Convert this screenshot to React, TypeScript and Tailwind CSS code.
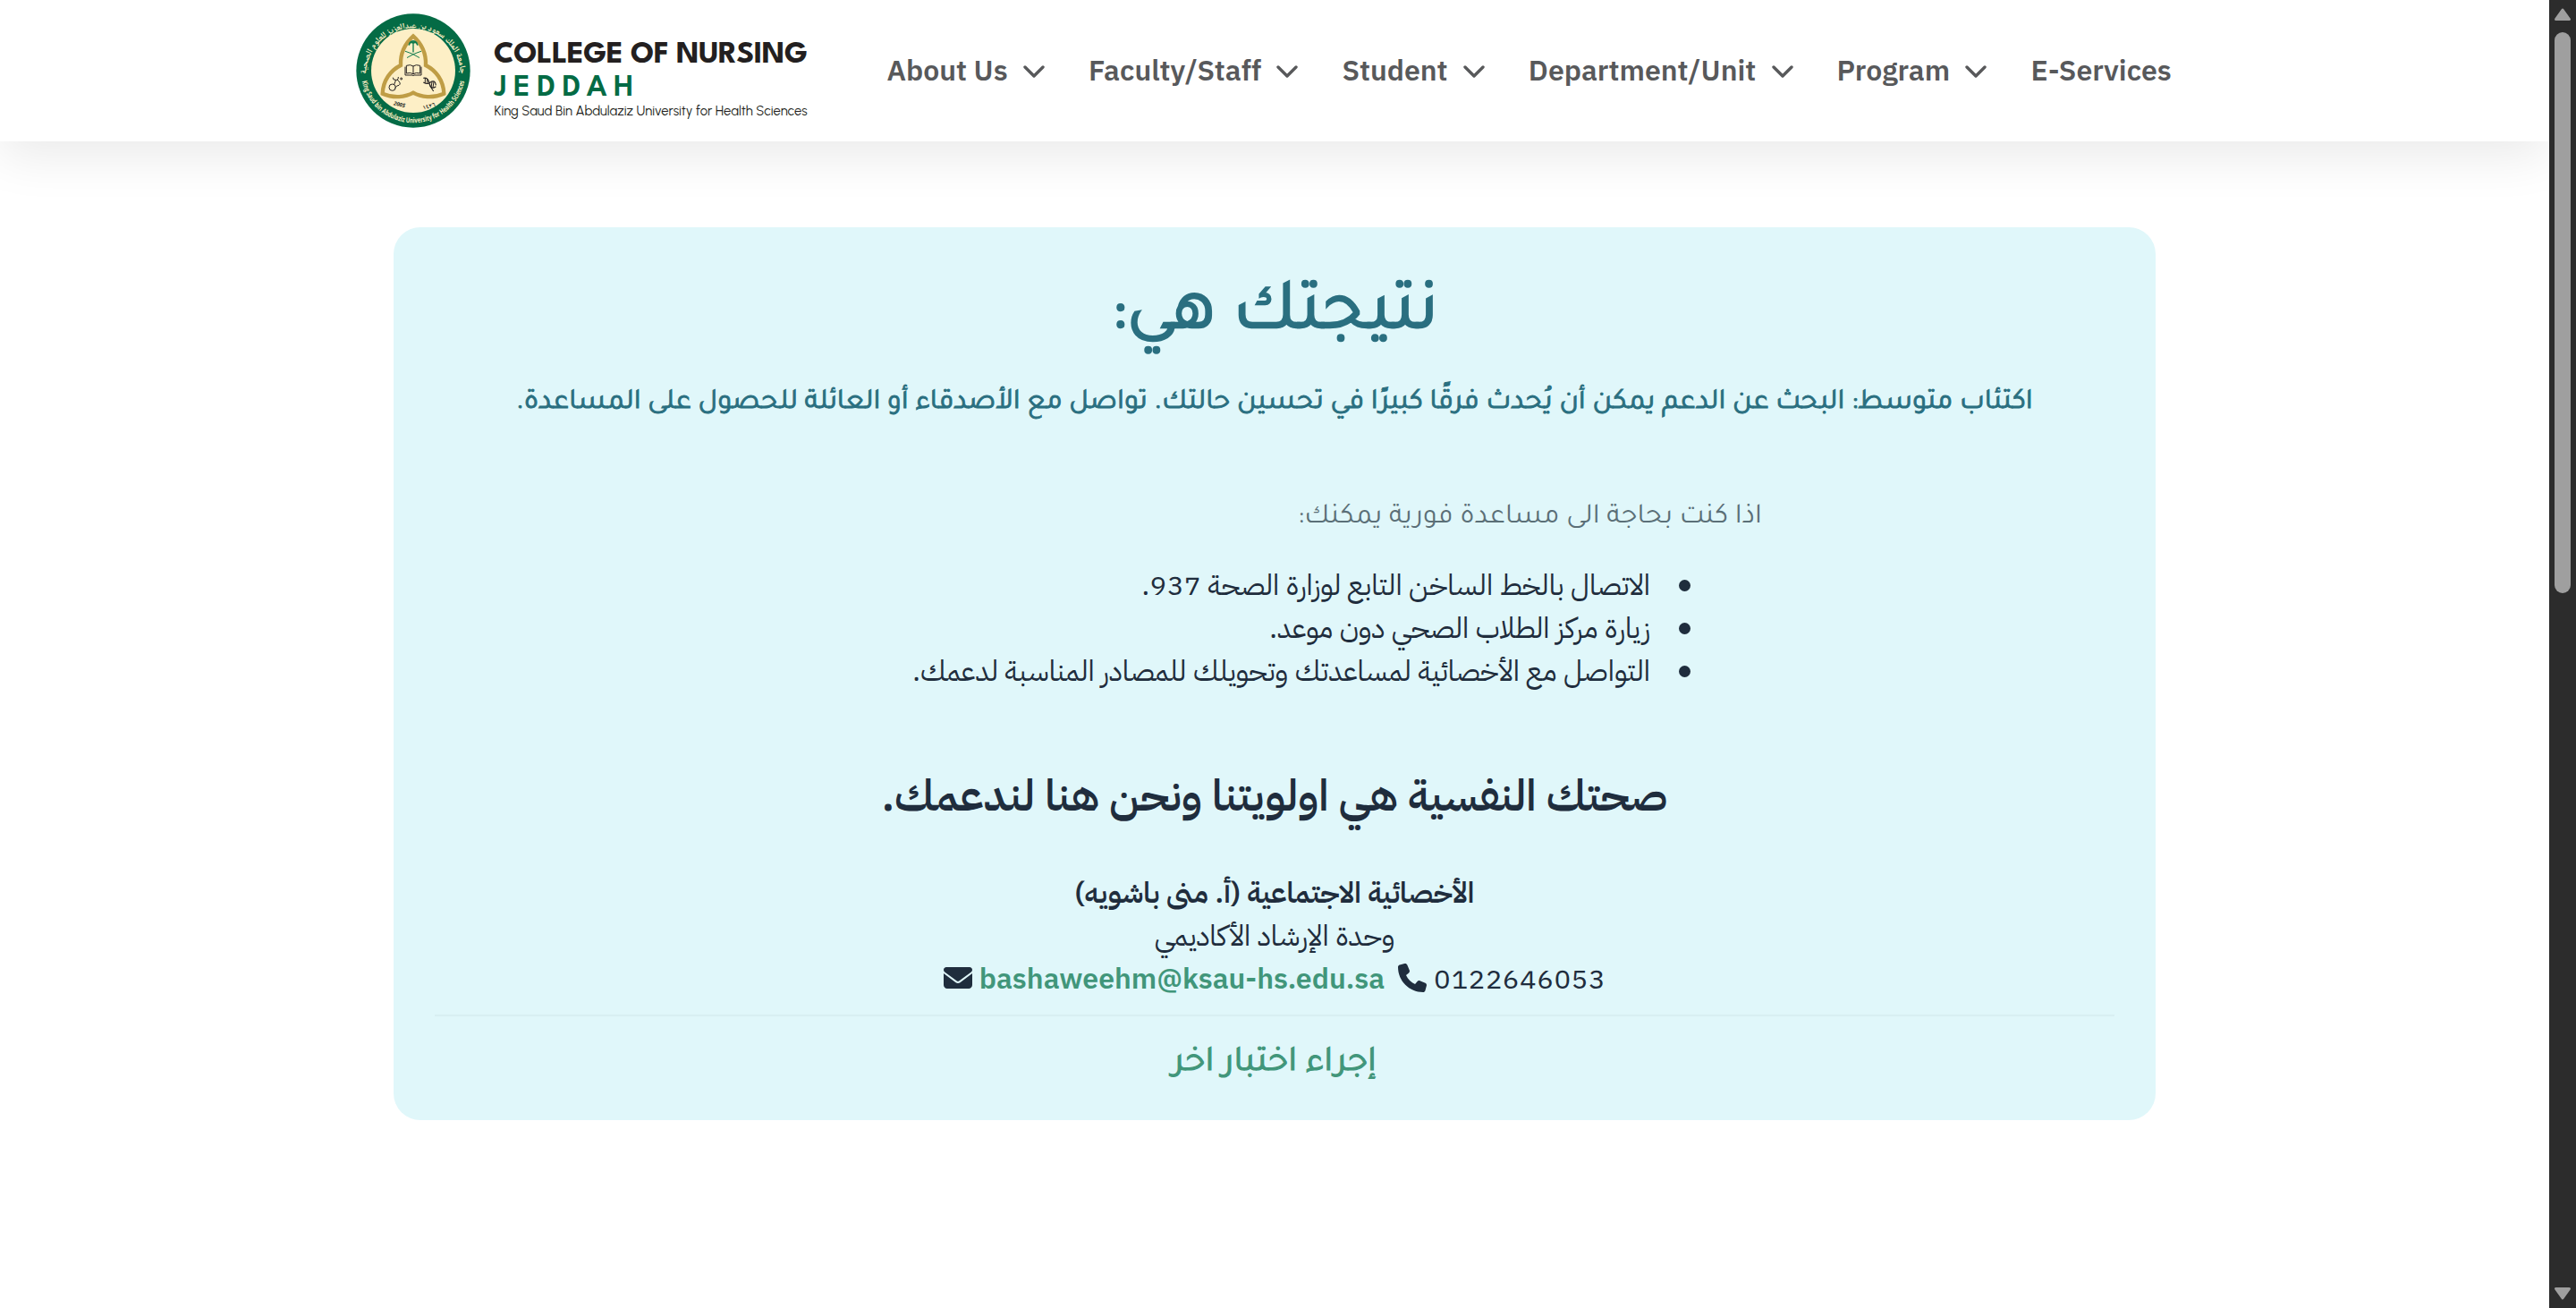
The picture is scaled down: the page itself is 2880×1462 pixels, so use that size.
import React from "react";
import { FaEnvelope, FaPhone } from "react-icons/fa6";

const navItems = [
  { label: "About Us", menu: true },
  { label: "Faculty/Staff", menu: true },
  { label: "Student", menu: true },
  { label: "Department/Unit", menu: true },
  { label: "Program", menu: true },
  { label: "E-Services", menu: false },
];

const helpOptions = [
  "الاتصال بالخط الساخن التابع لوزارة الصحة 937.",
  "زيارة مركز الطلاب الصحي دون موعد.",
  "التواصل مع الأخصائية لمساعدتك وتحويلك للمصادر المناسبة لدعمك.",
];

function Chevron() {
  return (
    <svg className="mt-[3px] h-[14px] w-6" viewBox="0 0 24 14" fill="none" stroke="currentColor" strokeWidth="3.4" strokeLinecap="round" strokeLinejoin="round">
      <path d="M2 2 L12 12 L22 2" />
    </svg>
  );
}

function Emblem() {
  return (
    <g transform="translate(-8 -7) scale(.33333)">
      <circle cx="216" cy="213" r="191" fill="#046b45" />
      <circle cx="216" cy="213" r="141" fill="#fdefc6" />
      <path id="ring-top" d="M58 228 A158 158 0 1 1 374 228" fill="none" />
      <path id="ring-bottom" d="M41 213 A175 175 0 0 0 391 213" fill="none" />
      <text fill="#fdefc6" fontSize="29" fontWeight="700" textAnchor="middle" fontFamily="'Noto Naskh Arabic', 'DejaVu Sans', sans-serif">
        <textPath href="#ring-top" startOffset="50%">جامعة الملك سعود بن عبدالعزيز للعلوم الصحية</textPath>
      </text>
      <text fill="#fdefc6" fontSize="24" fontWeight="700" textLength="478" lengthAdjust="spacingAndGlyphs" textAnchor="middle" fontFamily="'Open Sans', sans-serif">
        <textPath href="#ring-bottom" startOffset="50%">King Saud bin Abdulaziz University for Health Sciences</textPath>
      </text>
      <path d="M216 97 C186 124 172 155 174 195 C140 212 115 245 113 290 C150 306 190 302 216 287 C242 302 282 306 319 290 C317 245 292 212 258 195 C260 155 246 124 216 97 Z" fill="none" stroke="#bf9d45" strokeWidth="13" />
      <g stroke="#0f7a4c" fill="none" strokeWidth="4" strokeLinecap="round">
        <path d="M216 122 V150" />
        <path d="M202 126 Q206 114 216 120 Q226 114 230 126 M205 119 Q216 108 227 119" strokeWidth="5" />
        <path d="M190 148 Q212 154 236 169 M242 148 Q220 154 196 169" strokeWidth="3" />
      </g>
      <g stroke="#231f20" fill="none" strokeWidth="3">
        <path d="M193 196 Q207 191 216 198 Q225 191 239 196 V222 Q225 218 216 224 Q207 218 193 222 Z M216 198 V224 M189 200 V228 H213 Q216 232 219 228 H243 V200" />
        <circle cx="146" cy="269" r="11" />
        <path d="M152 259 L158 244 Q148 246 148 236 M158 244 Q166 246 166 234 M162 243 Q178 256 168 262 Q160 262 154 272" />
        <circle cx="176" cy="240" r="3" />
        <path d="M250 238 Q266 234 270 256 Q274 278 292 266 M250 252 Q266 262 276 250 Q290 244 292 262 M270 256 Q276 272 284 282" strokeWidth="3.5" />
        <path d="M256 238 L256 254 M263 240 L264 256 M279 250 L276 270 M285 250 L282 270" strokeWidth="3" />
      </g>
      <text transform="translate(149 328) rotate(13)" fontSize="18" fontWeight="700" fontStyle="italic" fill="#231f20" fontFamily="'Open Sans', sans-serif">2005</text>
      <text transform="translate(250 344) rotate(-16)" fontSize="22" fontWeight="700" fill="#231f20" fontFamily="'Noto Naskh Arabic', 'DejaVu Sans', sans-serif">١٤٢٦</text>
    </g>
  );
}

function Logo() {
  return (
    <svg className="h-32 w-[506px] shrink-0" viewBox="0 0 506 128">
      <Emblem />
      <text x="154" y="54.8" fontSize="35.5" fontWeight="700" fill="#231f20" textLength="351" lengthAdjust="spacing" fontFamily="'League Spartan', Lato, sans-serif">COLLEGE OF NURSING</text>
      <text x="154.5" y="91.9" fontSize="35.5" fontWeight="600" fill="#046b45" textLength="156" lengthAdjust="spacing" fontFamily="'League Spartan', Lato, sans-serif">JEDDAH</text>
      <text x="154.5" y="114" fontSize="14.8" fontWeight="400" fill="#231f20" textLength="350" lengthAdjust="spacing" fontFamily="Urbanist, Lato, sans-serif">King Saud Bin Abdulaziz University for Health Sciences</text>
    </svg>
  );
}

function Header() {
  return (
    <header className="flex h-[158px] shrink-0 items-center bg-white pb-px pl-[398px] shadow-[0_16px_56px_rgba(0,0,0,0.085)]">
      <Logo />
      <nav className="ml-[87.5px] flex items-center gap-[49px] text-[32px] leading-none font-semibold text-[#58595b]">
        {navItems.map((item) => (
          <a key={item.label} className="flex items-center gap-[17.3px] whitespace-nowrap">
            {item.label}
            {item.menu && <Chevron />}
          </a>
        ))}
      </nav>
    </header>
  );
}

function ResultCard() {
  return (
    <main dir="rtl" className="mx-auto mt-24 flex h-[998px] w-[1970px] flex-col items-center rounded-[30px] bg-[#e0f7fa] px-[46px] text-center text-[32px] leading-[48px] whitespace-nowrap text-[#1f2d3d]">
      <h1 className="mt-[55px] font-[Tajawal,'DejaVu_Sans',sans-serif] text-[80px] leading-[92px] text-[#2a6f80] [-webkit-text-stroke:2.4px_#2a6f80]">نتيجتك هي:</h1>
      <p className="mt-[26px] font-[Tajawal,'DejaVu_Sans',sans-serif] text-[#2a6f80] [-webkit-text-stroke:1px_#2a6f80]">
        اكتئاب متوسط: البحث عن الدعم يمكن أن يُحدث فرقًا كبيرًا في تحسين حالتك. تواصل مع الأصدقاء أو العائلة للحصول على المساعدة.
      </p>
      <section className="mt-20 w-[1090px] text-right">
        <p className="font-[Tajawal,'DejaVu_Sans',sans-serif] text-[#5b6f77]">اذا كنت بحاجة الى مساعدة فورية يمكنك:</p>
        <ul className="mt-[27px] pr-20">
          {helpOptions.map((option) => (
            <li key={option} className="flex items-center gap-8">
              <span className="size-[13px] rounded-full bg-current" />
              {option}
            </li>
          ))}
        </ul>
      </section>
      <h2 className="mt-20 text-[48px] leading-[72px] font-semibold">صحتك النفسية هي اولويتنا ونحن هنا لندعمك.</h2>
      <p className="mt-12">
        <strong className="font-semibold">الأخصائية الاجتماعية (أ. منى باشويه)</strong>
        <br />
        وحدة الإرشاد الأكاديمي
        <br />
        0122646053 <FaPhone className="inline size-8 align-[-4px]" />
        &nbsp; <a className="font-semibold text-[#41967a]">bashaweehm@ksau-hs.edu.sa</a> <FaEnvelope className="inline size-8 align-[-4px]" />
      </p>
      <hr className="mt-4 h-0.5 w-full border-0 bg-[#d8eff2]" />
      <a className="mt-6 font-[Tajawal,'DejaVu_Sans',sans-serif] text-[40px] leading-[60px] text-[#41967a] [-webkit-text-stroke:1.2px_#41967a]">إجراء اختبار اخر</a>
    </main>
  );
}

function Scrollbar() {
  return (
    <aside className="flex w-[30px] shrink-0 flex-col items-center bg-[#2c2c2c] py-[9px] text-[#9f9f9f]">
      <svg className="h-[14px] w-[18px]" viewBox="0 0 18 14" fill="currentColor" stroke="currentColor" strokeWidth="3" strokeLinejoin="round">
        <path d="M9 2 L16.5 12.5 H1.5 Z" />
      </svg>
      <div className="mt-[13px] h-[627px] w-[18px] rounded-full bg-current" />
      <svg className="mt-auto h-[14px] w-[18px]" viewBox="0 0 18 14" fill="currentColor" stroke="currentColor" strokeWidth="3" strokeLinejoin="round">
        <path d="M9 12 L1.5 1.5 H16.5 Z" />
      </svg>
    </aside>
  );
}

export default function App() {
  return (
    <div className="flex h-[1462px] w-[2880px] overflow-hidden bg-white font-['IBM_Plex_Sans_Arabic','IBM_Plex_Sans','DejaVu_Sans',sans-serif]">
      <div className="flex min-w-0 flex-1 flex-col">
        <Header />
        <ResultCard />
      </div>
      <Scrollbar />
    </div>
  );
}
